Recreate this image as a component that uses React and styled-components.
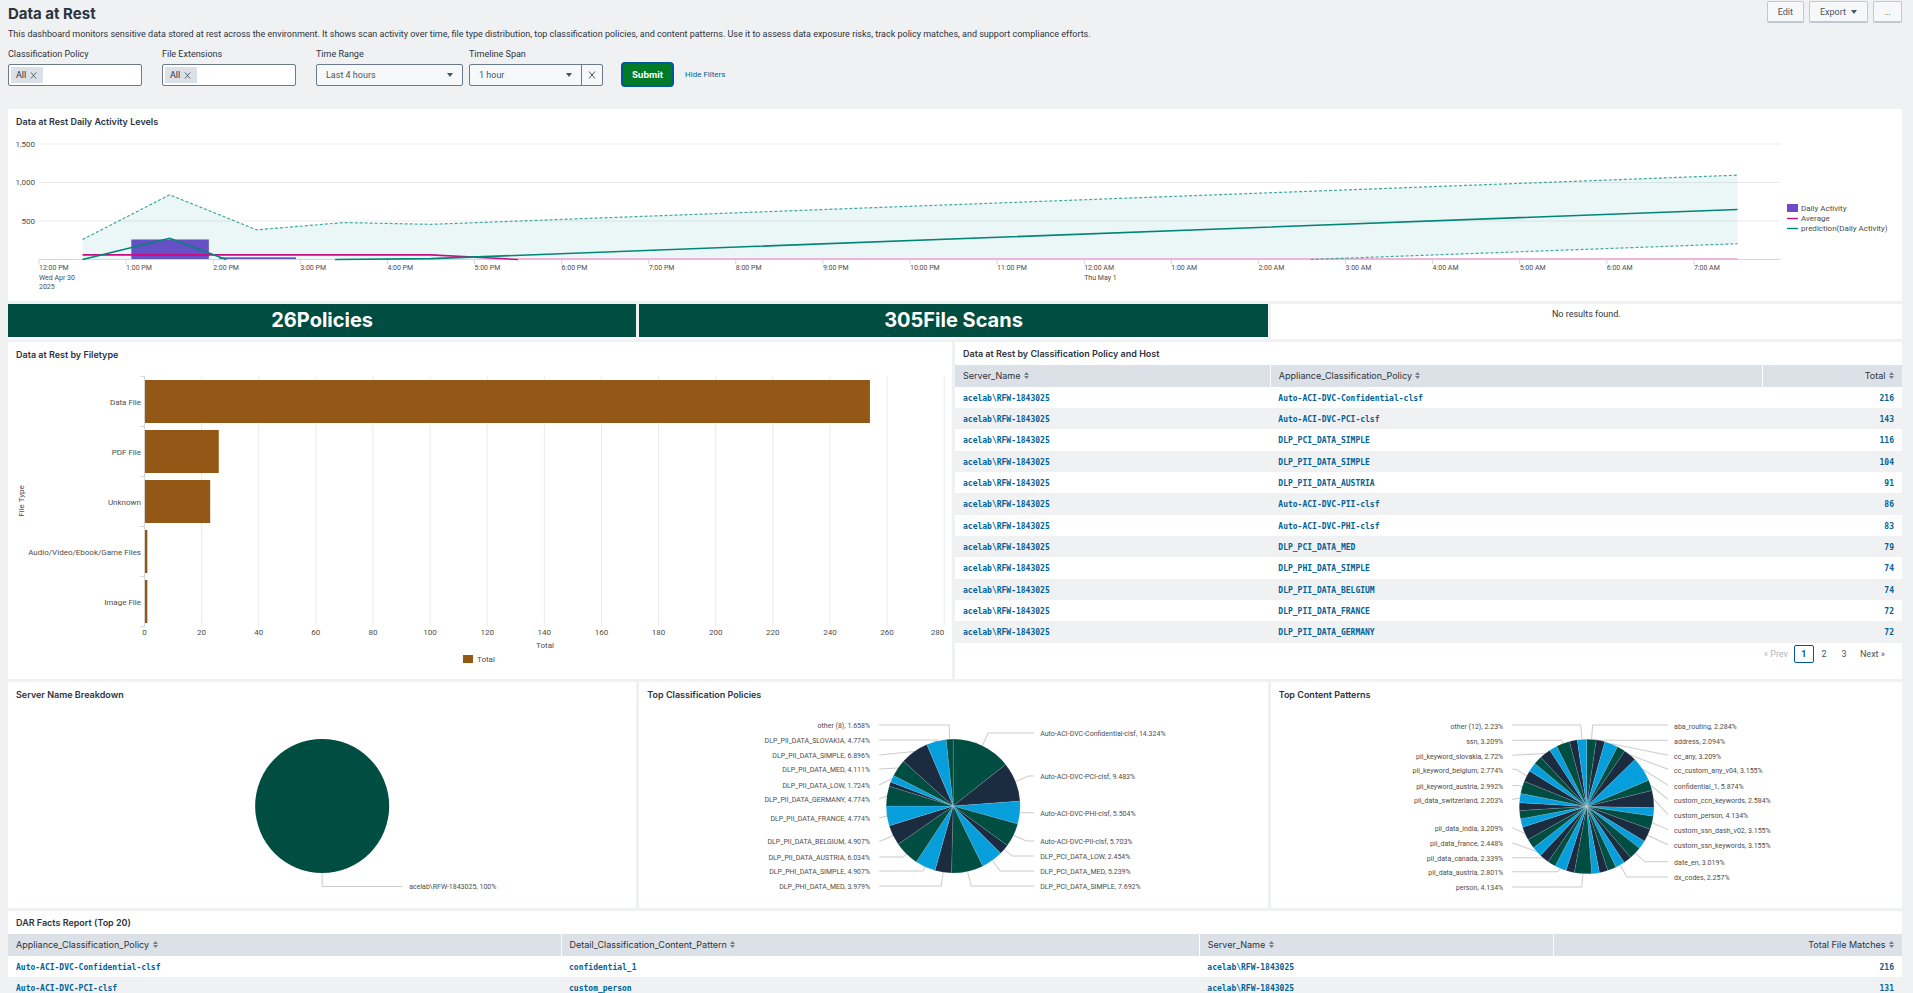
import React from 'react';
import styled, {createGlobalStyle} from 'styled-components';

const colors = {
    page: '#f0f1f3',
    panel: '#ffffff',
    head: '#dce0e7',
    text: '#2c3440',
    chartText: '#4d4d4d',
    grid: '#ebebeb',
    axis: '#d5d5d5',
    link: '#006297',
    pine: '#004d41',
    navy: '#1b2b40',
    sky: '#069edb',
    teal: '#008577',
    magenta: '#cc0b85',
    purple: '#6f4acb',
    brown: '#935716'
};

const fonts = {
    body: "Roboto, 'Liberation Sans', sans-serif",
    heading: "Inter, 'Liberation Sans', sans-serif",
    data: "'DejaVu Sans Mono', monospace"
};

const GlobalStyle = createGlobalStyle`
    * {
        box-sizing: border-box;
    }

    body {
        margin: 0;
        background: ${colors.page};
        color: ${colors.text};
        font-family: ${fonts.body};
        font-size: 9px;
        line-height: 12px;
    }

    button, input, select {
        font: inherit;
        color: inherit;
    }
`;

const Page = styled.div`
    padding: 0 11px 0 8px;
`;

const Header = styled.header`
    display: flex;
    justify-content: space-between;
    padding-top: 1px;
    height: 28px;
`;

const Title = styled.h1`
    margin: 3px 0 0;
    font-family: ${fonts.heading};
    font-size: 15px;
    line-height: 20px;
    font-weight: 700;
`;

const Actions = styled.div`
    display: flex;
    align-items: flex-start;
    gap: 5px;
`;

const ActionButton = styled.button`
    display: flex;
    align-items: center;
    gap: 5px;
    height: 22px;
    padding: 0 10px;
    border: 1px solid #c1c8d1;
    border-bottom-width: 2px;
    border-radius: 2px;
    background: #f7f8fa;
    color: #4a5564;
`;

const Description = styled.p`
    margin: 0;
    line-height: 12px;
`;

const Filters = styled.form`
    display: flex;
    align-items: flex-end;
    padding: 8px 0 23px;
`;

const Field = styled.div`
    width: ${(props) => props.$width}px;
    margin-right: ${(props) => props.$gap}px;
`;

const Label = styled.label`
    display: block;
    margin-bottom: 4px;
`;

const Control = styled.div`
    display: flex;
    height: 22px;
    border: 1px solid #6b7a8c;
    border-radius: 2px;
    background: ${(props) => props.$muted ? '#f7f8fa' : '#ffffff'};
`;

const Token = styled.span`
    display: flex;
    align-items: center;
    gap: 4px;
    margin: 2px;
    padding: 0 6px 0 5px;
    background: ${colors.head};
`;

const IconButton = styled.button`
    display: flex;
    align-items: center;
    justify-content: center;
    padding: 0;
    border: 0;
    background: none;
    color: #4a5564;
`;

const ClearButton = styled(IconButton)`
    width: 21px;
    border-left: 1px solid #6b7a8c;
`;

const TokenInput = styled.input`
    flex: 1;
    min-width: 0;
    border: 0;
    outline: 0;
    background: none;
`;

const SelectBox = styled.div`
    display: grid;
    flex: 1;
    align-items: center;

    > * {
        grid-area: 1 / 1;
    }

    > svg {
        justify-self: end;
        margin-right: 9px;
        pointer-events: none;
    }
`;

const Select = styled.select`
    width: 100%;
    height: 100%;
    padding: 0 9px;
    border: 0;
    appearance: none;
    background: none;
    color: #4a5564;
`;

const Submit = styled.button`
    height: 25px;
    width: 53px;
    margin: 0 11px -1px 18px;
    padding: 0;
    border: 2px solid #00589b;
    border-radius: 4px;
    background: #007a26;
    color: #ffffff;
    font-family: ${fonts.heading};
    font-weight: 700;
`;

const FilterLink = styled.a`
    align-self: flex-end;
    margin-bottom: 5px;
    color: ${colors.link};
    font-size: 8px;
    text-decoration: none;
`;

const Row = styled.section`
    display: grid;
    grid-template-columns: repeat(${(props) => props.$columns || 1}, minmax(0, 1fr));
    margin-bottom: 3px;
`;

const Panel = styled.article`
    display: flex;
    flex-direction: column;
    min-height: ${(props) => props.$height}px;
    margin-right: 3px;
    background: ${colors.panel};

    &:last-child {
        margin-right: 0;
    }
`;

const PanelTitle = styled.h2`
    margin: 0;
    padding: ${(props) => props.$tight ? '6px 8px 5px' : '7px 8px 6px'};
    font-family: ${fonts.heading};
    font-size: 9px;
    line-height: 12px;
    font-weight: 600;
`;

const Chart = styled.svg`
    display: block;
    width: 100%;
    height: auto;
    font-size: ${(props) => props.$small ? 7 : 8}px;
    fill: ${colors.chartText};
`;

const AxisLabel = styled.text`
    font-size: 7px;
`;

const SingleValue = styled.div`
    height: 33px;
    background: ${colors.pine};
    color: #ffffff;
    font-family: ${fonts.heading};
    font-size: 20px;
    line-height: 33px;
    font-weight: 700;
    text-align: center;
`;

const Empty = styled.p`
    margin: 0;
    padding-top: 4px;
    text-align: center;
`;

const Table = styled.table`
    width: 100%;
    border-collapse: collapse;
    table-layout: fixed;
`;

const HeadCell = styled.th`
    width: ${(props) => props.$width || 'auto'};
    height: 22px;
    padding: 0 8px;
    background: ${colors.head};
    font-family: ${fonts.heading};
    font-weight: 400;
    text-align: ${(props) => props.$right ? 'right' : 'left'};

    & + & {
        border-left: 1px solid #ffffff;
    }

    svg {
        margin-left: 1px;
    }
`;

const BodyRow = styled.tr`
    height: 21px;

    &:nth-child(3n) {
        height: 22px;
    }

    &:nth-child(even) {
        background: ${colors.page};
    }
`;

const Cell = styled.td`
    padding: 2px 8px 0;
    font-family: ${fonts.data};
    font-size: 8px;
    font-weight: 700;
    text-align: ${(props) => props.$right ? 'right' : 'left'};

    a {
        color: ${colors.link};
        text-decoration: none;
    }
`;

const Pager = styled.nav`
    display: flex;
    justify-content: flex-end;
    align-items: center;
    padding: 2px 17px 0 0;
`;

const PageButton = styled.button`
    height: 18px;
    min-width: 20px;
    padding: 0 ${(props) => props.$wide ? 0 : 5}px;
    margin-left: ${(props) => props.$wide ? 6 : 0}px;
    border: ${(props) => props.$current ? '1px solid #00589b' : '0'};
    border-radius: 2px;
    background: none;
    color: ${(props) => props.$current ? colors.link : '#4a5564'};
    font-weight: ${(props) => props.$current ? 700 : 400};

    &:disabled {
        margin-right: 6px;
        color: #b0b6bf;
    }
`;

const Caret = () =>
    <svg width="6" height="4" viewBox="0 0 6 4" aria-hidden="true">
        <path d="M0 0h6L3 4z" fill="#4a5564" />
    </svg>;

const Cross = ({size}) =>
    <svg width={size} height={size} viewBox="0 0 8 8" aria-hidden="true">
        <path d="M1 0.5l6 7M7 0.5l-6 7" stroke="#4a5564" strokeWidth="1" />
    </svg>;

const SortIcon = () =>
    <svg width="5" height="7" viewBox="0 0 5 7" aria-hidden="true">
        <path d="M0 3l2.5-3L5 3zM0 4h5L2.5 7z" fill="#74808f" />
    </svg>;

const TokenField = ({id, label}) =>
    <Field $width={134} $gap={20}>
        <Label htmlFor={id}>{label}</Label>
        <Control>
            <Token>
                All
                <IconButton type="button" aria-label="Remove All">
                    <Cross size={7} />
                </IconButton>
            </Token>
            <TokenInput id={id} type="text" />
        </Control>
    </Field>;

// Timeline: hours since noon on x, event count on y
const hourX = (hour) => 31 + hour * 87.1;
const countY = (count) => 125.5 - count * 0.077;
const toPoints = (rows) => rows.map(([hour, count]) => `${hourX(hour)},${countY(count)}`).join(' ');

const upper = [[0.5, 260], [1.5, 840], [2.5, 385], [3.5, 480], [4.5, 457], [19.5, 1095]];
const lower = [[14.6, 0], [19.5, 205]];
const prediction = [[0.5, 0], [1.5, 275], [2.15, 0]];
const predictionTail = [[3.4, 0], [4.5, 12], [19.5, 650]];
const average = [[0.5, 60], [4.5, 60], [5.5, 0]];
const activity = [[1.06, 1.95, 260], [2.07, 2.95, 28]];

const hourLabel = (hour) => {
    const clock = hour % 12 === 0 ? 12 : hour % 12;
    return `${clock}:00 ${hour < 12 ? 'PM' : 'AM'}`;
};

const Timeline = () =>
    <Chart viewBox="0 0 1894 166" role="img" aria-label="Daily activity timeline">
        {[500, 1000, 1500].map((count) =>
            <g key={count}>
                <path d={`M31 ${countY(count)}H1772`} stroke={colors.grid} />
                <text x="27" y={countY(count)} textAnchor="end" dominantBaseline="central">
                    {count.toLocaleString('en-US')}
                </text>
            </g>
        )}
        {activity.map(([from, to, count]) =>
            <rect
                key={from}
                x={hourX(from)}
                y={countY(count)}
                width={hourX(to) - hourX(from)}
                height={countY(0) - countY(count)}
                fill={colors.purple}
            />
        )}
        <polygon
            points={`${toPoints(upper)} ${toPoints([...lower].reverse())} ${toPoints([[0.5, 0]])}`}
            fill="#009e8c"
            fillOpacity="0.08"
        />
        <g fill="none">
            <path d="M31 125.5H1772" stroke={colors.axis} />
            <path d={`M${hourX(5.5)} 125H${hourX(19.5)}`} stroke="#f0b3dc" strokeWidth="2" />
            <polyline points={toPoints(upper)} stroke="#3fa99d" strokeDasharray="3 2" strokeWidth="1.2" />
            <polyline points={toPoints(lower)} stroke="#3fa99d" strokeDasharray="3 2" strokeWidth="1.2" />
            <polyline points={toPoints(average)} stroke={colors.magenta} strokeWidth="1.6" />
            <polyline points={toPoints(prediction)} stroke={colors.teal} strokeWidth="1.6" />
            <polyline points={toPoints(predictionTail)} stroke={colors.teal} strokeWidth="1.6" />
        </g>
        {Array.from({length: 20}, (_, hour) =>
            <g key={hour}>
                <path d={`M${hourX(hour)} 126v4`} stroke={colors.axis} />
                <AxisLabel x={hourX(hour)} y="134" dominantBaseline="central">{hourLabel(hour)}</AxisLabel>
            </g>
        )}
        <AxisLabel x={hourX(0)} y="144" dominantBaseline="central">Wed Apr 30</AxisLabel>
        <AxisLabel x={hourX(0)} y="153" dominantBaseline="central">2025</AxisLabel>
        <AxisLabel x={hourX(12)} y="144" dominantBaseline="central">Thu May 1</AxisLabel>
        <rect x="1779" y="70" width="11" height="8" fill={colors.purple} />
        <path d="M1779 84.5h11" stroke={colors.magenta} strokeWidth="1.4" />
        <path d="M1779 94.5h11" stroke={colors.teal} strokeWidth="1.4" />
        <text x="1793" y="74" dominantBaseline="central">Daily Activity</text>
        <text x="1793" y="84" dominantBaseline="central">Average</text>
        <text x="1793" y="94" dominantBaseline="central">prediction(Daily Activity)</text>
    </Chart>;

const fileTypes = [
    ['Data File', 254],
    ['PDF File', 26],
    ['Unknown', 23],
    ['Audio/Video/Ebook/Game Files', 1],
    ['Image File', 1]
];
const totalX = (total) => 136.5 + total * 2.856;

const FiletypeChart = () =>
    <Chart viewBox="0 0 944 309" role="img" aria-label="Data at rest by filetype">
        {Array.from({length: 15}, (_, i) => i * 20).map((total) =>
            <g key={total}>
                <path d={`M${totalX(total)} 9V259`} stroke={total ? colors.grid : colors.axis} />
                <text
                    x={totalX(total)}
                    y="265"
                    textAnchor={total === 280 ? 'end' : 'middle'}
                    dominantBaseline="central"
                >
                    {total}
                </text>
            </g>
        )}
        {fileTypes.map(([name, total], i) =>
            <g key={name}>
                <path d={`M132.5 ${9.5 + i * 50}h4`} stroke={colors.axis} />
                <rect
                    x="137"
                    y={13 + i * 50}
                    width={totalX(total) - 137}
                    height="43"
                    fill={colors.brown}
                />
                <text x="133" y={35 + i * 50} textAnchor="end" dominantBaseline="central">{name}</text>
            </g>
        )}
        <path d="M132.5 259.5h4" stroke={colors.axis} />
        <text transform="translate(13 134) rotate(-90)" textAnchor="middle" dominantBaseline="central">
            File Type
        </text>
        <text x="537" y="278" textAnchor="middle" dominantBaseline="central">Total</text>
        <rect x="455" y="288" width="10" height="8" fill={colors.brown} />
        <text x="469" y="292" dominantBaseline="central">Total</text>
    </Chart>;

/*
 * Slices go clockwise from the top: [share, name, label y, elbow x].
 * Small slices have no label, and a slice without an elbow gets a straight leader.
 */
const policySlices = [
    [14.324, 'Auto-ACI-DVC-Confidential-clsf', -72, 35],
    [9.483, 'Auto-ACI-DVC-PCI-clsf', -29, 75],
    [5.504, 'Auto-ACI-DVC-PHI-clsf', 8],
    [5.703, 'Auto-ACI-DVC-PII-clsf', 36, 73],
    [2.454, 'DLP_PCI_DATA_LOW', 51, 59],
    [5.239, 'DLP_PCI_DATA_MED', 66, 47],
    [7.692, 'DLP_PCI_DATA_SIMPLE', 81, 18],
    [3.979, 'DLP_PHI_DATA_MED', 81, -12],
    [4.907, 'DLP_PHI_DATA_SIMPLE', 66, -30],
    [6.034, 'DLP_PII_DATA_AUSTRIA', 52, -50],
    [4.907, 'DLP_PII_DATA_BELGIUM', 36, -72],
    [4.774, 'DLP_PII_DATA_FRANCE', 13],
    [4.774, 'DLP_PII_DATA_GERMANY', -6],
    [1.063],
    [1.724, 'DLP_PII_DATA_LOW', -20],
    [4.111, 'DLP_PII_DATA_MED', -36],
    [6.896, 'DLP_PII_DATA_SIMPLE', -50],
    [4.774, 'DLP_PII_DATA_SLOVAKIA', -65, -16],
    [1.658, 'other (8)', -80, -4]
];

const patternSlices = [
    [2.284, 'aba_routing', -80, 6],
    [2.094, 'address', -65, 14],
    [3.209, 'cc_any', -50],
    [2.02],
    [3.155, 'cc_custom_any_v04', -36],
    [5.874, 'confidential_1', -20],
    [2.584, 'custom_ccn_keywords', -6],
    [4.134, 'custom_person', 9],
    [2],
    [3.155, 'custom_ssn_dash_v02', 24],
    [3.155, 'custom_ssn_keywords', 39],
    [2.05],
    [3.019, 'date_en', 56, 58],
    [1.93],
    [2.257, 'dx_codes', 71, 40],
    [2.1],
    [2.03],
    [1.87],
    [4.134, 'person', 81, -5],
    [2.02],
    [2.801, 'pii_data_austria', 66, -29],
    [1.95],
    [2.339, 'pii_data_canada', 52, -45],
    [2.448, 'pii_data_france', 37],
    [2.35],
    [3.209, 'pii_data_india', 22],
    [2.05],
    [1.95],
    [1.9],
    [2.203, 'pii_data_switzerland', -6],
    [2.992, 'pii_keyword_austria', -20, -68],
    [2.774, 'pii_keyword_belgium', -36, -70],
    [2.15],
    [2.05],
    [2.72, 'pii_keyword_slovakia', -50],
    [1.9],
    [3.209, 'ssn', -65, -25],
    [1.9],
    [2.23, 'other (12)', -80, -6]
];

const radius = 67;
const sliceColors = [colors.pine, colors.navy, colors.sky];

const rimPoint = (part) => {
    const angle = part * Math.PI * 2;
    return [Math.sin(angle) * radius, -Math.cos(angle) * radius];
};

const Pie = ({slices, label}) => {
    const sum = slices.reduce((total, [share]) => total + share, 0);
    let start = 0;

    return (
        <Chart $small viewBox="-314 -99 628 200" role="img" aria-label={label}>
            {slices.map(([share, name, y, elbow], i) => {
                const from = rimPoint(start / sum);
                const middle = rimPoint((start + share / 2) / sum);
                const isRight = start + share / 2 < sum / 2;
                start += share;
                const to = rimPoint(start / sum);
                const end = isRight ? 81 : -74;
                const bend = elbow === undefined ? '' : `L${elbow} ${y - 1}`;

                return (
                    <g key={i}>
                        {name && <path d={`M${end} ${y - 1}${bend}L${middle}`} fill="none" stroke="#cccccc" />}
                        <path
                            d={`M0 0L${from}A${radius} ${radius} 0 0 1 ${to}Z`}
                            fill={sliceColors[i % 3]}
                            stroke="#ffffff"
                            strokeOpacity="0.3"
                            strokeWidth="0.4"
                        />
                        {name &&
                            <text
                                x={isRight ? 87 : -83}
                                y={y}
                                textAnchor={isRight ? 'start' : 'end'}
                                dominantBaseline="central"
                            >
                                {name}, {share}%
                            </text>
                        }
                    </g>
                );
            })}
        </Chart>
    );
};

const ServerPie = () =>
    <Chart $small viewBox="-314 -99 628 200" role="img" aria-label="Server name breakdown">
        <path d="M0 67V80.5H80" fill="none" stroke="#cccccc" />
        <circle r={radius} fill={colors.pine} />
        <text x="87" y="81" dominantBaseline="central">acelab\RFW-1843025, 100%</text>
    </Chart>;

const server = 'acelab\\RFW-1843025';

const policyRows = [
    ['Auto-ACI-DVC-Confidential-clsf', 216],
    ['Auto-ACI-DVC-PCI-clsf', 143],
    ['DLP_PCI_DATA_SIMPLE', 116],
    ['DLP_PII_DATA_SIMPLE', 104],
    ['DLP_PII_DATA_AUSTRIA', 91],
    ['Auto-ACI-DVC-PII-clsf', 86],
    ['Auto-ACI-DVC-PHI-clsf', 83],
    ['DLP_PCI_DATA_MED', 79],
    ['DLP_PHI_DATA_SIMPLE', 74],
    ['DLP_PII_DATA_BELGIUM', 74],
    ['DLP_PII_DATA_FRANCE', 72],
    ['DLP_PII_DATA_GERMANY', 72]
].map(([policy, total]) => [server, policy, total]);

const factRows = [
    ['Auto-ACI-DVC-Confidential-clsf', 'confidential_1', server, 216],
    ['Auto-ACI-DVC-PCI-clsf', 'custom_person', server, 131]
];

const DataTable = ({columns, rows}) =>
    <Table>
        <thead>
            <tr>
                {columns.map(([name, width], i) =>
                    <HeadCell key={name} scope="col" $width={width} $right={i === columns.length - 1}>
                        {name} <SortIcon />
                    </HeadCell>
                )}
            </tr>
        </thead>
        <tbody>
            {rows.map((row, r) =>
                <BodyRow key={r}>
                    {row.map((value, i) =>
                        <Cell key={i} $right={i === row.length - 1}>
                            <a href="#drilldown">{value}</a>
                        </Cell>
                    )}
                </BodyRow>
            )}
        </tbody>
    </Table>;

const App = () =>
    <Page>
        <GlobalStyle />
        <Header>
            <Title>Data at Rest</Title>
            <Actions>
                <ActionButton type="button">Edit</ActionButton>
                <ActionButton type="button">Export <Caret /></ActionButton>
                <ActionButton type="button">...</ActionButton>
            </Actions>
        </Header>
        <Description>
            This dashboard monitors sensitive data stored at rest across the environment. It shows scan activity
            over time, file type distribution, top classification policies, and content patterns. Use it to assess
            data exposure risks, track policy matches, and support compliance efforts.
        </Description>
        <Filters onSubmit={(event) => event.preventDefault()}>
            <TokenField id="policy" label="Classification Policy" />
            <TokenField id="extensions" label="File Extensions" />
            <Field $width={147} $gap={6}>
                <Label htmlFor="range">Time Range</Label>
                <Control $muted>
                    <SelectBox>
                        <Select id="range">
                            <option>Last 4 hours</option>
                        </Select>
                        <Caret />
                    </SelectBox>
                </Control>
            </Field>
            <Field $width={134} $gap={0}>
                <Label htmlFor="span">Timeline Span</Label>
                <Control $muted>
                    <SelectBox>
                        <Select id="span">
                            <option>1 hour</option>
                        </Select>
                        <Caret />
                    </SelectBox>
                    <ClearButton type="button" aria-label="Clear Timeline Span">
                        <Cross size={8} />
                    </ClearButton>
                </Control>
            </Field>
            <Submit type="submit">Submit</Submit>
            <FilterLink href="#filters">Hide Filters</FilterLink>
        </Filters>

        <Row>
            <Panel $height={192}>
                <PanelTitle>Data at Rest Daily Activity Levels</PanelTitle>
                <Timeline />
            </Panel>
        </Row>
        <Row $columns={3}>
            <Panel $height={35}>
                <SingleValue>26Policies</SingleValue>
            </Panel>
            <Panel $height={35}>
                <SingleValue>305File Scans</SingleValue>
            </Panel>
            <Panel $height={35}>
                <Empty>No results found.</Empty>
            </Panel>
        </Row>
        <Row $columns={2}>
            <Panel $height={337}>
                <PanelTitle>Data at Rest by Filetype</PanelTitle>
                <FiletypeChart />
            </Panel>
            <Panel $height={337}>
                <PanelTitle $tight>Data at Rest by Classification Policy and Host</PanelTitle>
                <DataTable
                    columns={[['Server_Name', '33.3%'], ['Appliance_Classification_Policy', '52%'], ['Total']]}
                    rows={policyRows}
                />
                <Pager aria-label="Pages">
                    <PageButton type="button" disabled $wide>« Prev</PageButton>
                    <PageButton type="button" $current>1</PageButton>
                    <PageButton type="button">2</PageButton>
                    <PageButton type="button">3</PageButton>
                    <PageButton type="button" $wide>Next »</PageButton>
                </Pager>
            </Panel>
        </Row>
        <Row $columns={3}>
            <Panel $height={226}>
                <PanelTitle>Server Name Breakdown</PanelTitle>
                <ServerPie />
            </Panel>
            <Panel $height={226}>
                <PanelTitle>Top Classification Policies</PanelTitle>
                <Pie slices={policySlices} label="Top classification policies" />
            </Panel>
            <Panel $height={226}>
                <PanelTitle>Top Content Patterns</PanelTitle>
                <Pie slices={patternSlices} label="Top content patterns" />
            </Panel>
        </Row>
        <Row>
            <Panel $height={87}>
                <PanelTitle $tight>DAR Facts Report (Top 20)</PanelTitle>
                <DataTable
                    columns={[
                        ['Appliance_Classification_Policy', '29.2%'],
                        ['Detail_Classification_Content_Pattern', '33.7%'],
                        ['Server_Name', '18.7%'],
                        ['Total File Matches']
                    ]}
                    rows={factRows}
                />
            </Panel>
        </Row>
    </Page>;

export default App;
